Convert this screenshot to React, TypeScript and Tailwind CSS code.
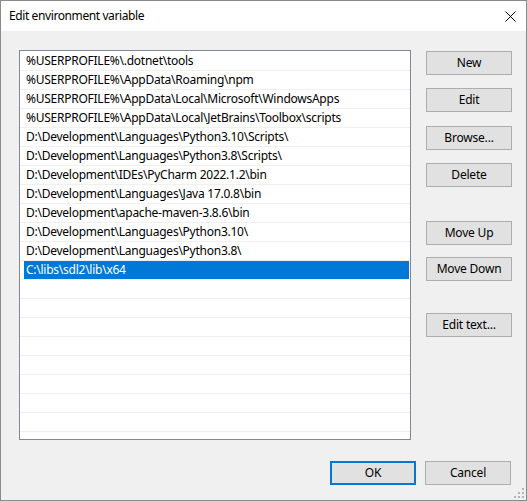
const PATHS = [
  '%USERPROFILE%\\.dotnet\\tools',
  '%USERPROFILE%\\AppData\\Roaming\\npm',
  '%USERPROFILE%\\AppData\\Local\\Microsoft\\WindowsApps',
  '%USERPROFILE%\\AppData\\Local\\JetBrains\\Toolbox\\scripts',
  'D:\\Development\\Languages\\Python3.10\\Scripts\\',
  'D:\\Development\\Languages\\Python3.8\\Scripts\\',
  'D:\\Development\\IDEs\\PyCharm 2022.1.2\\bin',
  'D:\\Development\\Languages\\Java 17.0.8\\bin',
  'D:\\Development\\apache-maven-3.8.6\\bin',
  'D:\\Development\\Languages\\Python3.10\\',
  'D:\\Development\\Languages\\Python3.8\\',
  'C:\\libs\\sdl2\\lib\\x64',
];

const SELECTED = 11;
const ROWS = 21;

// Side buttons, with the space above each one (px)
const SIDE: { label: string; gap: string }[] = [
  { label: 'New', gap: 'mt-[1px]' },
  { label: 'Edit', gap: 'mt-[13px]' },
  { label: 'Browse...', gap: 'mt-[14px]' },
  { label: 'Delete', gap: 'mt-[13px]' },
  { label: 'Move Up', gap: 'mt-[34px]' },
  { label: 'Move Down', gap: 'mt-[12px]' },
  { label: 'Edit text...', gap: 'mt-[32px]' },
];

function Button({ label, className = '', primary = false }: { label: string; className?: string; primary?: boolean }) {
  return (
    <div
      className={`flex h-[24px] w-[86px] items-center justify-center bg-[#e1e1e1] text-[12px] tracking-[-0.2px] text-black ${
        primary ? 'border-2 border-[#0078d7]' : 'border border-[#adadad]'
      } ${className}`}
    >
      {label}
    </div>
  );
}

export default function App() {
  return (
    <div
      className="relative flex h-[501px] w-[527px] flex-col border border-[#8a8a8a] bg-[#f0f0f0] text-black"
      style={{ fontFamily: '"Noto Sans", "Open Sans", sans-serif' }}
    >
      {/* title bar */}
      <div className="flex h-[30px] items-center justify-between bg-white pl-[8px] pr-[10px]">
        <span className="text-[12px] tracking-[-0.4px]">Edit environment variable</span>
        <svg width="11" height="11" viewBox="0 0 11 11" className="mt-[1px]">
          <path d="M0.5 0.5 L10.5 10.5 M10.5 0.5 L0.5 10.5" stroke="#000" strokeWidth="1" fill="none" />
        </svg>
      </div>

      {/* body */}
      <div className="flex flex-1 flex-col pl-[18px] pr-[14px] pt-[19px]">
        <div className="flex">
          <div className="h-[390px] w-[392px] overflow-hidden border border-[#828790] bg-white pt-[1px]">
            {Array.from({ length: ROWS }).map((_, i) => {
              const text = PATHS[i];
              const sel = i === SELECTED;
              return (
                <div key={i} className="flex h-[19px] border-b border-[#f0f0f0] pl-[4px] pr-[1px]">
                  <div
                    className={`flex flex-1 items-center pl-[2px] text-[12px] leading-none tracking-[-0.25px] whitespace-nowrap ${
                      sel ? 'bg-[#0078d7] text-white' : ''
                    }`}
                  >
                    {text}
                  </div>
                </div>
              );
            })}
          </div>
          <div className="ml-[15px] flex flex-col">
            {SIDE.map((b) => (
              <Button key={b.label} label={b.label} className={b.gap} />
            ))}
          </div>
        </div>

        <div className="mt-[21px] flex justify-end gap-[9px] pr-[1px]">
          <Button label="OK" primary />
          <Button label="Cancel" />
        </div>
      </div>

      {/* resize grip */}
      <div className="absolute bottom-[2px] right-[2px] grid grid-cols-3 gap-[2px]">
        <span className="h-[2px] w-[2px]" />
        <span className="h-[2px] w-[2px]" />
        <span className="h-[2px] w-[2px] bg-[#b4b4b4]" />
        <span className="h-[2px] w-[2px]" />
        <span className="h-[2px] w-[2px] bg-[#b4b4b4]" />
        <span className="h-[2px] w-[2px] bg-[#b4b4b4]" />
        <span className="h-[2px] w-[2px] bg-[#b4b4b4]" />
        <span className="h-[2px] w-[2px] bg-[#b4b4b4]" />
        <span className="h-[2px] w-[2px] bg-[#b4b4b4]" />
      </div>
    </div>
  );
}
